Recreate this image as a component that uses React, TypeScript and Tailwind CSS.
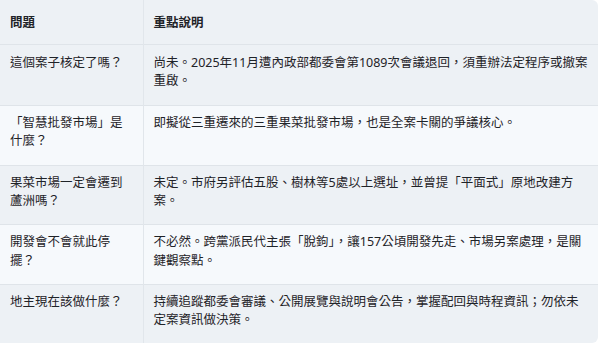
const rows = [
  {
    q: '這個案子核定了嗎？',
    a: '尚未。2025年11月遭內政部都委會第1089次會議退回，須重辦法定程序或撤案重啟。',
  },
  {
    q: '「智慧批發市場」是什麼？',
    a: '即擬從三重遷來的三重果菜批發市場，也是全案卡關的爭議核心。',
  },
  {
    q: '果菜市場一定會遷到蘆洲嗎？',
    a: '未定。市府另評估五股、樹林等5處以上選址，並曾提「平面式」原地改建方案。',
  },
  {
    q: '開發會不會就此停擺？',
    a: '不必然。跨黨派民代主張「脫鉤」，讓157公頃開發先走、市場另案處理，是關鍵觀察點。',
  },
  {
    q: '地主現在該做什麼？',
    a: '持續追蹤都委會審議、公開展覽與說明會公告，掌握配回與時程資訊；勿依未定案資訊做決策。',
  },
]

export default function App() {
  return (
    <div className="w-[600px] h-[345px] overflow-hidden bg-white font-['Noto_Sans','Noto_Sans_CJK_TC',sans-serif] text-[12.5px] leading-[18.3px] text-[#1f2328]">
      <table className="w-[598px] table-fixed border-collapse overflow-hidden rounded-r-md">
        <colgroup>
          <col className="w-[143px]" />
          <col />
        </colgroup>
        <thead>
          <tr className="h-[44px] bg-[#edf1f5]">
            <th className="px-[10px] pt-[3px] text-left align-middle font-bold">問題</th>
            <th className="border-l border-[#e1e6eb] px-[10px] pt-[3px] text-left align-middle font-bold">重點說明</th>
          </tr>
        </thead>
        <tbody>
          {rows.map((row, i) => (
            <tr
              key={row.q}
              className={`border-t border-[#dfe4e9] ${i % 2 === 0 ? 'bg-[#edf1f5]' : 'bg-[#f6f9fc]'}`}
            >
              <td className={`px-[10px] align-top ${i === 0 ? 'pt-[9px] pb-[15px]' : 'pt-[8px] pb-[14px]'}`}>{row.q}</td>
              <td className={`border-l border-[#e1e6eb] px-[10px] align-top ${i === 0 ? 'pt-[9px] pb-[15px]' : 'pt-[8px] pb-[14px]'}`}>
                {row.a}
              </td>
            </tr>
          ))}
        </tbody>
      </table>
    </div>
  )
}
